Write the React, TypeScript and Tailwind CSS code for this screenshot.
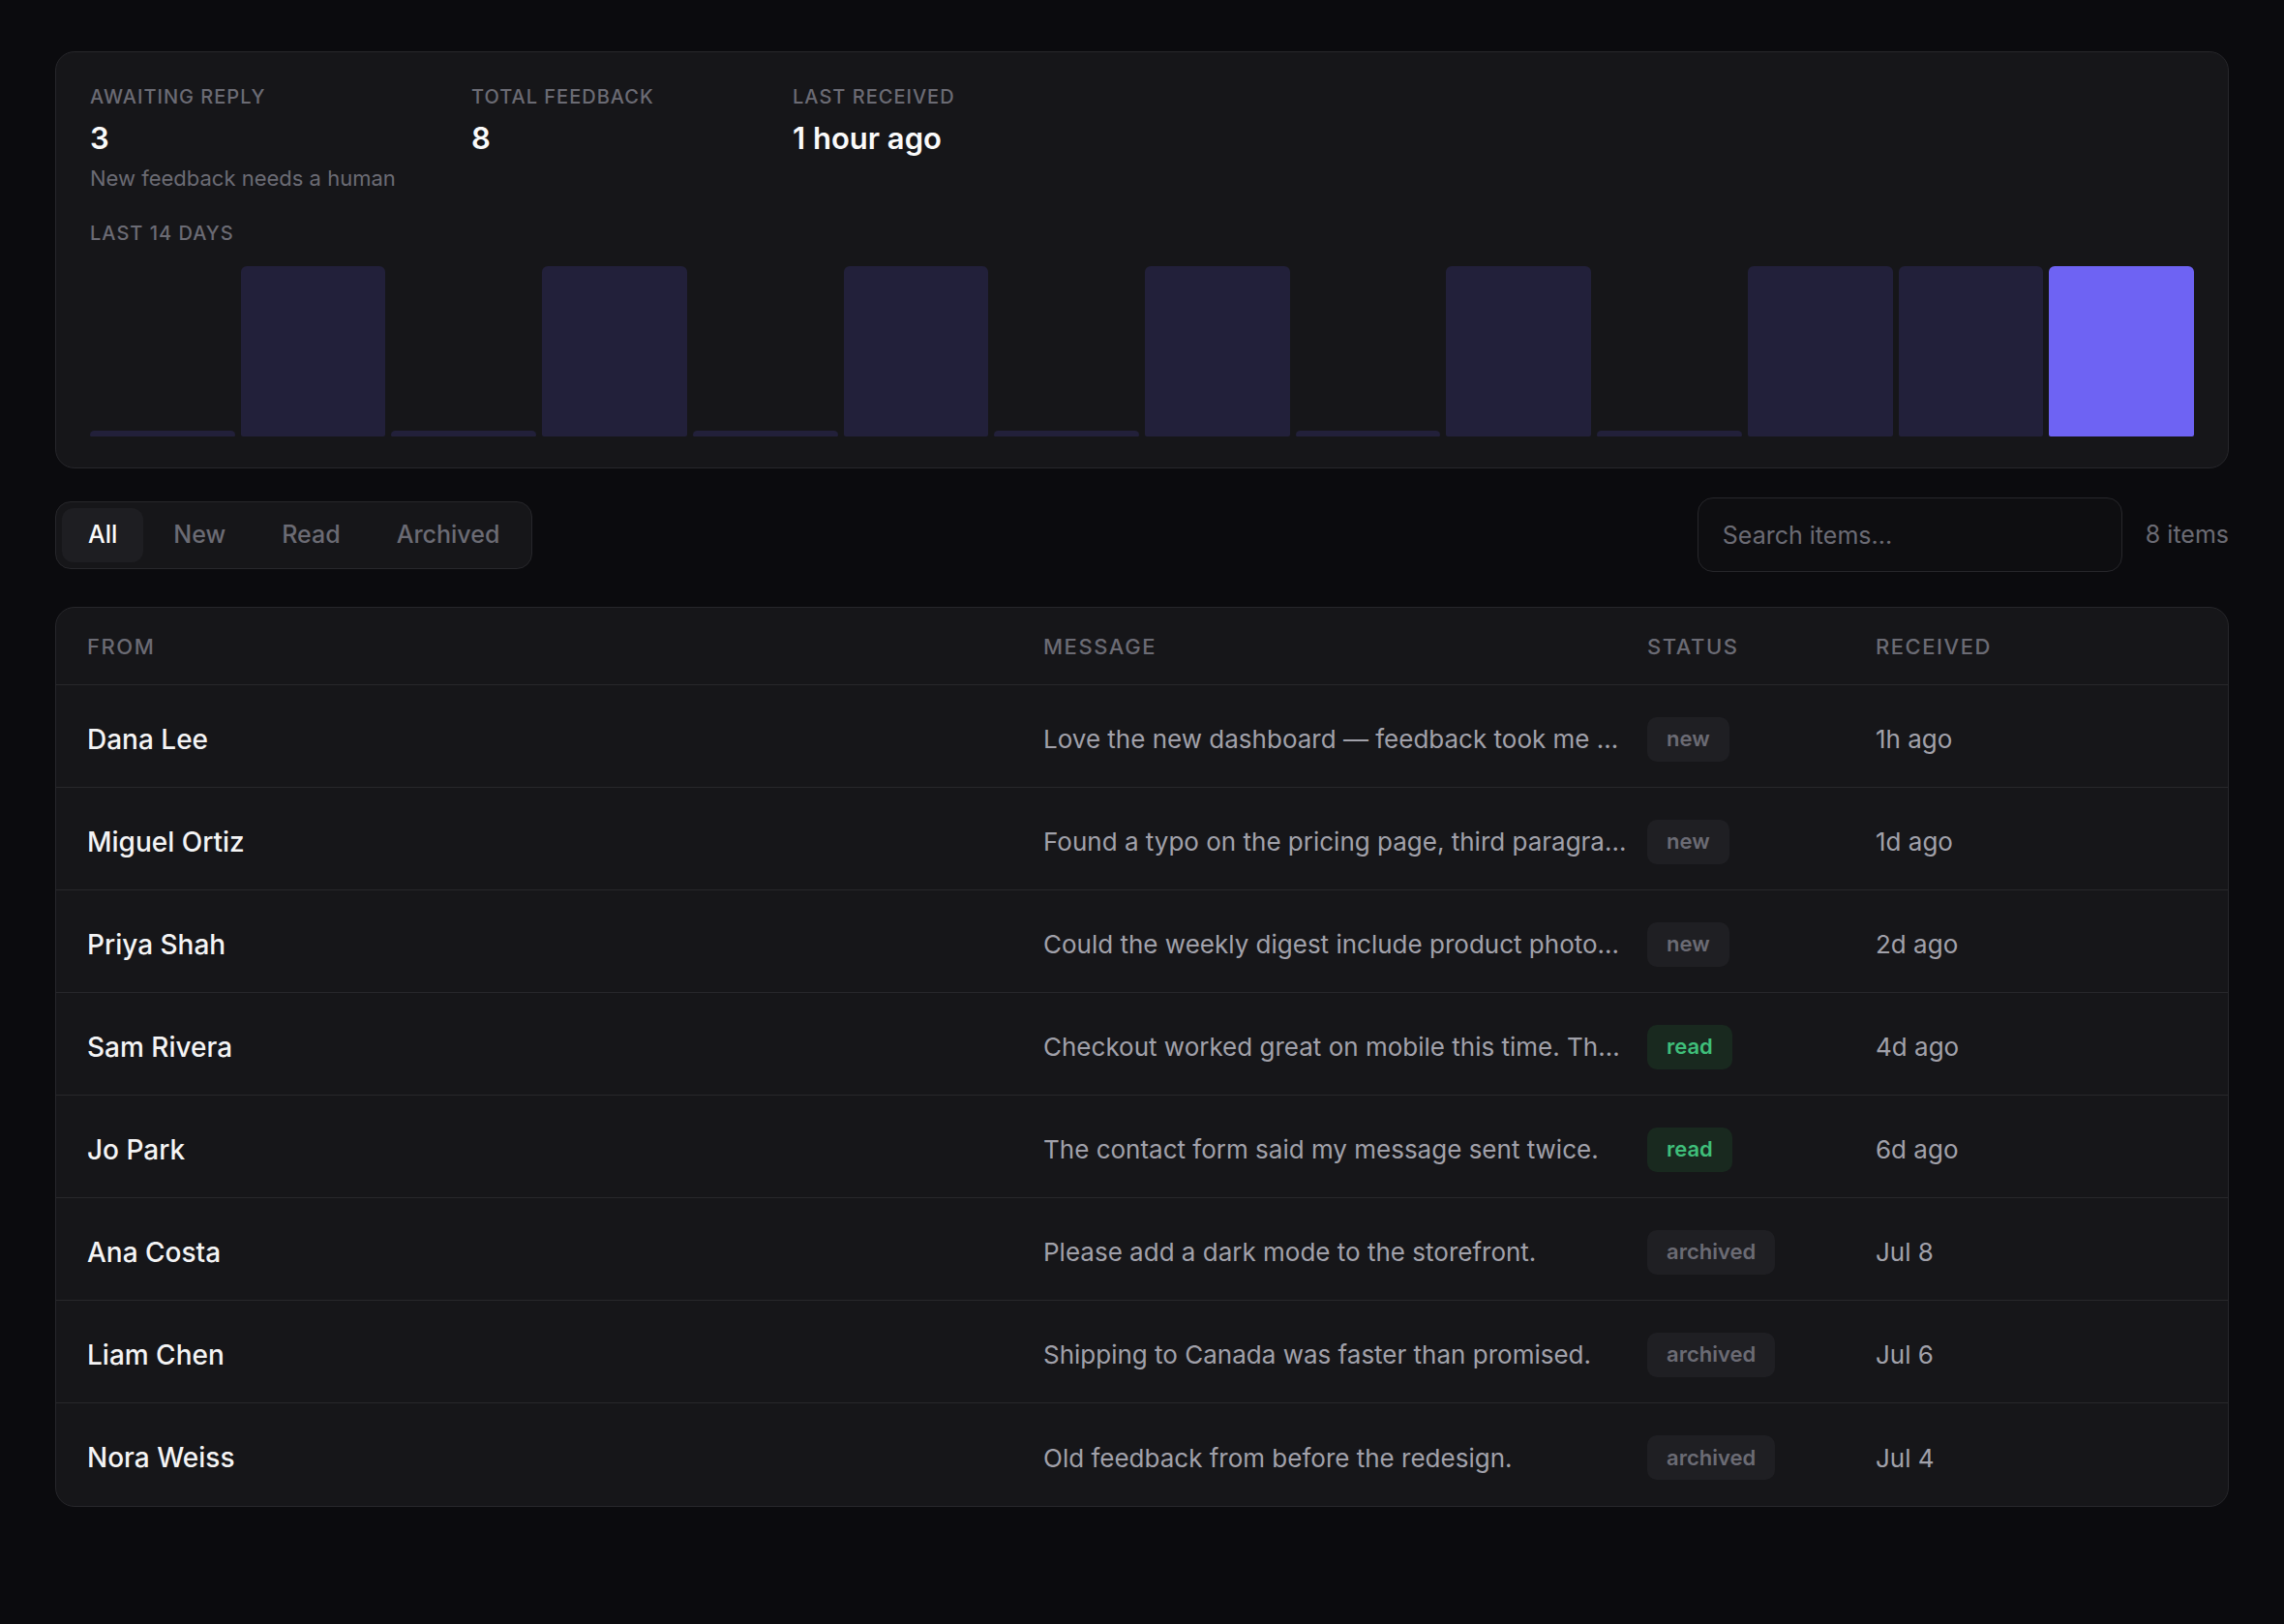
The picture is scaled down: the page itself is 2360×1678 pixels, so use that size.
import { useState } from "react";

type Status = "new" | "read" | "archived";

type Feedback = {
  from: string;
  message: string;
  status: Status;
  received: string;
};

const feedback: Feedback[] = [
  { from: "Dana Lee", message: "Love the new dashboard — feedback took me under a minute to send.", status: "new", received: "1h ago" },
  { from: "Miguel Ortiz", message: "Found a typo on the pricing page, third paragraph says “anual”.", status: "new", received: "1d ago" },
  { from: "Priya Shah", message: "Could the weekly digest include product photos next time?", status: "new", received: "2d ago" },
  { from: "Sam Rivera", message: "Checkout worked great on mobile this time. Thanks for the fix!", status: "read", received: "4d ago" },
  { from: "Jo Park", message: "The contact form said my message sent twice.", status: "read", received: "6d ago" },
  { from: "Ana Costa", message: "Please add a dark mode to the storefront.", status: "archived", received: "Jul 8" },
  { from: "Liam Chen", message: "Shipping to Canada was faster than promised.", status: "archived", received: "Jul 6" },
  { from: "Nora Weiss", message: "Old feedback from before the redesign.", status: "archived", received: "Jul 4" },
];

// one value per day, oldest first
const days = [0, 1, 0, 1, 0, 1, 0, 1, 0, 1, 0, 1, 1, 1];

const tabs = ["All", "New", "Read", "Archived"];

const badgeStyles: Record<Status, string> = {
  new: "bg-[#1f1f23] text-[#6b6b74]",
  read: "bg-[#19291f] text-[#3fbf7a]",
  archived: "bg-[#1f1f23] text-[#6b6b74]",
};

function Stat({ label, value, hint, className }: { label: string; value: string; hint?: string; className?: string }) {
  return (
    <div className={className}>
      <div className="text-[20px] leading-[24px] font-medium uppercase tracking-[0.05em] text-[#6b6b74]">{label}</div>
      <div className="mt-[13px] text-[31px] leading-[36px] font-semibold text-[#fafafa]">{value}</div>
      {hint && <div className="mt-[9px] text-[22px] leading-[28px] text-[#6b6b74]">{hint}</div>}
    </div>
  );
}

function ActivityChart() {
  const max = Math.max(...days);
  return (
    <div className="mt-[22px] flex h-[176px] items-end gap-[6px]">
      {days.map((v, i) => {
        const isToday = i === days.length - 1;
        const h = v === 0 ? 6 : (v / max) * 176;
        return (
          <div
            key={i}
            className={`flex-1 rounded-t-[6px] rounded-b-[2px] ${isToday ? "bg-[#6e63f3]" : "bg-[#22203a]"}`}
            style={{ height: h }}
          />
        );
      })}
    </div>
  );
}

export default function App() {
  const [tab, setTab] = useState("All");

  return (
    <div className="min-h-screen bg-[#0b0b0e] px-[57px] pt-[53px] pb-[120px] font-['Inter','Noto_Sans',sans-serif] text-[#fafafa]">
      <section className="rounded-[20px] border border-[#27272b] bg-[#161619] px-[35px] pt-[34px] pb-[32px]">
        <div className="flex">
          <Stat className="w-[394px]" label="Awaiting reply" value="3" hint="New feedback needs a human" />
          <Stat className="w-[332px]" label="Total feedback" value="8" />
          <Stat label="Last received" value="1 hour ago" />
        </div>
        <div className="mt-[31px] text-[20px] leading-[24px] font-medium uppercase tracking-[0.05em] text-[#6b6b74]">
          Last 14 days
        </div>
        <ActivityChart />
      </section>

      <div className="mt-[30px] flex items-center justify-between">
        <div className="flex gap-[4px] rounded-[16px] border border-[#27272b] bg-[#161619] p-[6px]">
          {tabs.map((t) => (
            <button
              key={t}
              onClick={() => setTab(t)}
              className={`h-[56px] rounded-[12px] px-[27px] text-[25px] font-medium ${
                tab === t ? "bg-[#1e1e22] text-[#fafafa]" : "text-[#6b6b74]"
              }`}
            >
              {t}
            </button>
          ))}
        </div>
        <div className="flex items-center gap-[24px]">
          <input
            placeholder="Search items..."
            className="h-[77px] w-[439px] rounded-[16px] border border-[#27272b] bg-[#0e0e11] px-[25px] text-[25px] text-[#fafafa] placeholder:text-[#6b6b74] outline-none"
          />
          <span className="text-[25px] text-[#6b6b74]">8 items</span>
        </div>
      </div>

      <section className="mt-[36px] overflow-hidden rounded-[20px] border border-[#27272b] bg-[#161619]">
        <div className="grid h-[80px] grid-cols-[970px_606px_218px_1fr] items-center gap-[18px] border-b border-[#27272b] px-[32px] pt-[2px] text-[22px] font-medium uppercase tracking-[0.07em] text-[#6b6b74]">
          <div>From</div>
          <div>Message</div>
          <div>Status</div>
          <div>Received</div>
        </div>
        {feedback.map((f, i) => (
          <div
            key={f.from}
            className={`grid h-[106px] grid-cols-[970px_606px_218px_1fr] items-center gap-[18px] px-[32px] pt-[6px] ${
              i < feedback.length - 1 ? "border-b border-[#27272b]" : ""
            }`}
          >
            <div className="text-[28px] font-medium text-[#f4f4f5]">{f.from}</div>
            <div className="truncate text-[26px] text-[#a1a1aa]">{f.message}</div>
            <div>
              <span className={`inline-flex h-[46px] items-center rounded-[10px] px-[20px] text-[22px] font-semibold ${badgeStyles[f.status]}`}>
                {f.status}
              </span>
            </div>
            <div className="text-[26px] text-[#a1a1aa]">{f.received}</div>
          </div>
        ))}
      </section>
    </div>
  );
}
